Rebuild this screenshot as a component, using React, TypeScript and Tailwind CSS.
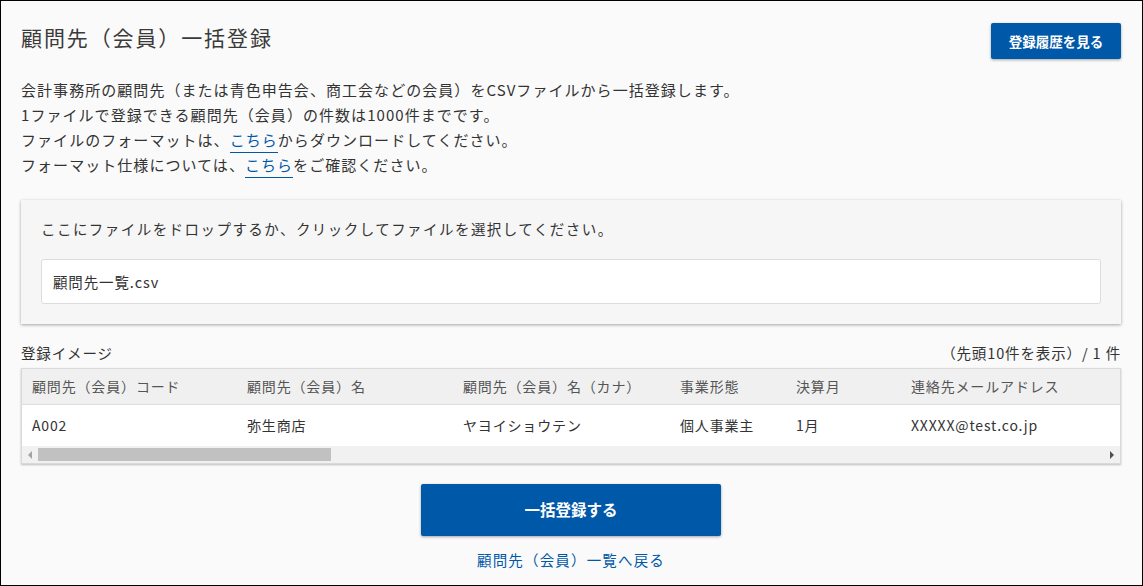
const font = "font-['Noto_Sans_CJK_JP','Noto_Sans',sans-serif]";

const columns = [
  { label: "顧問先（会員）コード", value: "A002", width: "w-[215px]" },
  { label: "顧問先（会員）名", value: "弥生商店", width: "w-[216px]" },
  { label: "顧問先（会員）名（カナ）", value: "ヤヨイショウテン", width: "w-[217px]" },
  { label: "事業形態", value: "個人事業主", width: "w-[116px]" },
  { label: "決算月", value: "1月", width: "w-[115px]" },
  { label: "連絡先メールアドレス", value: "XXXXX@test.co.jp", width: "w-[260px]" },
];

function DocLink({ children }: { children: React.ReactNode }) {
  return (
    <a className="border-b border-[#0058a8] pb-[2px] text-[#0058a8]" href="#">
      {children}
    </a>
  );
}

function PreviewTable() {
  return (
    <div className="overflow-hidden border border-[#d9d9d9] bg-white shadow-[0_1px_2px_rgba(0,0,0,0.25)]">
      <div className="flex h-[36px] items-center border-b border-[#dedede] bg-[#f0f0f0] text-[#555]">
        {columns.map((c) => (
          <div key={c.label} className={`${c.width} shrink-0 whitespace-nowrap pl-[10px]`}>
            {c.label}
          </div>
        ))}
      </div>
      <div className="flex h-[41px] items-center text-[#333]">
        {columns.map((c) => (
          <div key={c.label} className={`${c.width} shrink-0 whitespace-nowrap pl-[10px]`}>
            {c.value}
          </div>
        ))}
      </div>
      {/* horizontal scrollbar */}
      <div className="flex h-[17px] items-center bg-[#f1f1f1]">
        <div className="flex w-[16px] items-center justify-center">
          <span className="h-0 w-0 border-y-[4px] border-r-[4px] border-y-transparent border-r-[#a3a3a3]" />
        </div>
        <div className="flex-1 py-[2px]">
          <div className="h-[13px] w-[293px] bg-[#c1c1c1]" />
        </div>
        <div className="flex w-[16px] items-center justify-center">
          <span className="h-0 w-0 border-y-[4px] border-l-[4px] border-y-transparent border-l-[#505050]" />
        </div>
      </div>
    </div>
  );
}

export default function App() {
  return (
    <div
      className={`${font} h-[586px] w-[1143px] overflow-hidden border border-black bg-[#fafafa] text-[#333]`}
    >
      <div className="pl-[20px] pr-[21px]">
        <div className="flex items-start justify-between pt-[22px]">
          <h1 className="text-[21px] leading-[28px] tracking-[0.09em] text-[#3a3a3a]">
            顧問先（会員）一括登録
          </h1>
          <button className="h-[36px] w-[130px] rounded-[2px] bg-[#0058a8] text-[13.5px] font-bold text-white shadow-[0_1px_3px_rgba(0,0,0,0.35)]">
            登録履歴を見る
          </button>
        </div>

        <div className="mt-[18px] text-[15px] leading-[25px] tracking-[0.07em]">
          <p>会計事務所の顧問先（または青色申告会、商工会などの会員）をCSVファイルから一括登録します。</p>
          <p>1ファイルで登録できる顧問先（会員）の件数は1000件までです。</p>
          <p>
            ファイルのフォーマットは、<DocLink>こちら</DocLink>からダウンロードしてください。
          </p>
          <p>
            フォーマット仕様については、<DocLink>こちら</DocLink>をご確認ください。
          </p>
        </div>

        <div className="mt-[23px] bg-[#f6f6f6] px-[20px] pb-[20px] pt-[17px] shadow-[0_1px_3px_rgba(0,0,0,0.35)]">
          <p className="text-[14.5px] leading-[24px] tracking-[0.1em]">
            ここにファイルをドロップするか、クリックしてファイルを選択してください。
          </p>
          <div className="mt-[18px] flex h-[45px] items-center rounded-[3px] border border-[#dcdcdc] bg-white px-[11px] text-[14.5px] tracking-[0.06em]">
            顧問先一覧.csv
          </div>
        </div>

        <div className="mt-[19px] flex items-end justify-between text-[14.5px] leading-[20px] tracking-[0.06em]">
          <span>登録イメージ</span>
          <span>（先頭10件を表示）/ 1 件</span>
        </div>
        <div className="mt-[5px] text-[14px] tracking-[0.06em]">
          <PreviewTable />
        </div>

        <div className="mt-[20px] flex flex-col items-center">
          <button className="h-[52px] w-[300px] rounded-[2px] bg-[#0058a8] text-[15.5px] font-bold text-white shadow-[0_1px_3px_rgba(0,0,0,0.35)]">
            一括登録する
          </button>
          <a href="#" className="mt-[13px] text-[14.5px] tracking-[0.08em] text-[#0058a8]">
            顧問先（会員）一覧へ戻る
          </a>
        </div>
      </div>
    </div>
  );
}
